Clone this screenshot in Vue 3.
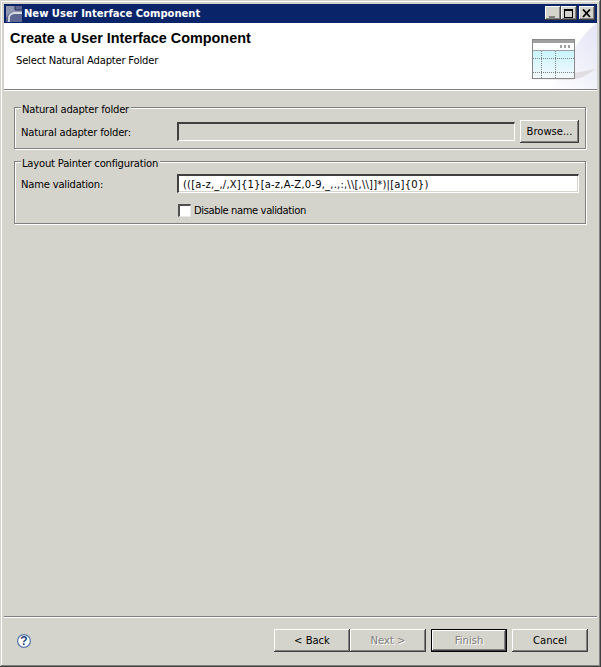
<script setup>
const buttons = [
  { label: '< Back', w: 76, mr: 0 },
  { label: 'Next >', w: 76, mr: 5, disabled: true },
  { label: 'Finish', w: 76, mr: 5, disabled: true, def: true },
  { label: 'Cancel', w: 76, mr: 0 },
]
</script>

<template>
  <div class="window">
    <div class="titlebar">
      <svg class="appicon" width="16" height="16" viewBox="0 0 16 16">
        <rect width="16" height="16" fill="#5c6690" />
        <path d="M0 0h9v4h7v2H8C4 6 2 8 1 11H0z" fill="#8f95ae" />
        <path d="M3 16v-5c1-3 3-4 6-4h7" fill="none" stroke="#d8dae2" stroke-width="1.8" />
        <path d="M9 0v4h7" fill="none" stroke="#2a3058" />
      </svg>
      <span class="title">New User Interface Component</span>
      <div class="winbtns">
        <button class="winbtn">
          <svg width="10" height="9" viewBox="0 0 10 9"><rect x="1" y="7" width="6" height="2" fill="#808080" /></svg>
        </button>
        <button class="winbtn">
          <svg width="10" height="9" viewBox="0 0 10 9"><path d="M0 0h9v9H0zM1 2v6h7V2z" fill="#000" fill-rule="evenodd" /></svg>
        </button>
        <button class="winbtn close">
          <svg width="10" height="9" viewBox="0 0 10 9"><path d="M1 0.5l7 7.5M8 0.5L1 8" stroke="#000" stroke-width="1.8" /></svg>
        </button>
      </div>
    </div>

    <header class="banner">
      <div class="bannertext">
        <h1>Create a User Interface Component</h1>
        <p>Select Natural Adapter Folder</p>
      </div>
      <svg class="wizard" width="78" height="66" viewBox="0 0 78 66">
        <defs>
          <linearGradient id="cells" x1="0" y1="0" x2="0" y2="1">
            <stop offset="0" stop-color="#c8f4fc" />
            <stop offset="1" stop-color="#f6fafe" />
          </linearGradient>
          <linearGradient id="glow" x1="0" y1="1" x2="1" y2="0">
            <stop offset="0" stop-color="#ffffff" />
            <stop offset="1" stop-color="#e4e4f6" />
          </linearGradient>
        </defs>
        <path d="M78 0v66H30C44 48 58 14 78 0z" fill="url(#glow)" />
        <path d="M8 56C30 54 58 50 76 46C70 52 60 56 50 57z" fill="#d6d0d4" opacity="0.6" />
        <rect x="13" y="16" width="43" height="40" fill="#fff" />
        <rect x="13" y="16" width="43" height="4" fill="#a0a0a0" />
        <rect x="13" y="28" width="43" height="28" fill="url(#cells)" />
        <rect x="13.5" y="16.5" width="42" height="39" fill="none" stroke="#888" />
        <path d="M14 27.5h41" stroke="#a0a0a0" />
        <path d="M41 22h2v3h-2zM45 22h2v3h-2zM49 22h2v3h-2z" fill="#a0a0a0" />
        <path d="M14 35.5h41M14 49.5h41M22.5 28v27M36.5 28v27" stroke="#808080" stroke-dasharray="1 1" />
      </svg>
    </header>
    <div class="rule"></div>

    <main class="content">
      <section class="group first">
        <span class="legend">Natural adapter folder</span>
        <div class="row">
          <label class="lbl">Natural adapter folder:</label>
          <div class="field disabled short"></div>
          <button class="btn browse">Browse...</button>
        </div>
      </section>
      <section class="group second">
        <span class="legend">Layout Painter configuration</span>
        <div class="row">
          <label class="lbl">Name validation:</label>
          <div class="field long">(([a-z,_,/,X]{1}[a-z,A-Z,0-9,_,.,:,\\[,\\]]*)|[a]{0})</div>
        </div>
        <div class="checkrow">
          <span class="check"></span>
          <span class="checktext">Disable name validation</span>
        </div>
      </section>
    </main>

    <div class="rule"></div>
    <footer class="footer">
      <svg class="help" width="16" height="16" viewBox="0 0 16 16">
        <circle cx="8" cy="8" r="6.4" fill="#fff" stroke="#5a78a8" stroke-width="1.3" />
        <text x="8" y="12.2" text-anchor="middle" class="q">?</text>
      </svg>
      <div class="actions">
        <button
          v-for="b in buttons"
          :key="b.label"
          class="btn action"
          :class="{ off: b.disabled, def: b.def }"
          :style="{ width: b.w + 'px', marginRight: b.mr + 'px' }"
        >{{ b.label }}</button>
      </div>
    </footer>
  </div>
</template>

<style>
html, body { margin: 0; background: #d5d4cc; }
</style>

<style scoped>
.window {
  box-sizing: border-box;
  width: 601px;
  height: 667px;
  padding: 4px;
  display: flex;
  flex-direction: column;
  background: #d5d4cc;
  box-shadow: inset -1px -1px 0 #404040, inset 1px 1px 0 #d5d4cc, inset -2px -2px 0 #808080, inset 2px 2px 0 #fff;
  font-family: "DejaVu Sans", sans-serif;
  font-size: 10px;
  color: #000;
}
.titlebar {
  height: 19px;
  flex: none;
  display: flex;
  align-items: center;
  background: #0a246a;
  color: #fff;
  padding-left: 2px;
}
.appicon { flex: none; }
.title {
  margin-left: 2px;
  font-weight: 700;
  font-size: 10px;
  margin-top: -1px;
}
.winbtns { margin-left: auto; display: flex; margin-right: 2px; margin-top: -1px; }
.winbtn {
  width: 16px;
  height: 14px;
  padding: 0;
  border: 0;
  background: #d5d4cc;
  box-shadow: inset -1px -1px 0 #404040, inset 1px 1px 0 #fff, inset -2px -2px 0 #808080;
  display: flex;
  align-items: center;
  justify-content: center;
}
.close { margin-left: 2px; }
.banner {
  height: 66px;
  flex: none;
  background: #fff;
  display: flex;
  justify-content: space-between;
}
.bannertext { padding: 7px 0 0 6px; }
h1 {
  margin: 0;
  font-family: "Liberation Sans", sans-serif;
  font-size: 14.4px;
  line-height: 17px;
  font-weight: 700;
}
p { margin: 7px 0 0 6px; line-height: 13px; letter-spacing: -0.2px; }
.rule {
  flex: none;
  height: 1px;
  background: #808080;
  border-bottom: 1px solid #fff;
}
.content {
  flex: 1;
  padding: 16px 11px 0 10px;
  min-height: 0;
}
.group {
  position: relative;
  box-sizing: border-box;
  border: 1px solid #808080;
  box-shadow: 1px 1px 0 #fff, inset 1px 1px 0 #fff;
  padding: 0 6px;
}
.first { height: 42px; padding-top: 12px; }
.second { height: 63px; margin-top: 12px; padding-top: 12px; }
.legend {
  position: absolute;
  left: 6px;
  top: -5px;
  line-height: 13px;
  padding: 0 2px 0 1px;
  background: #d5d4cc;
  letter-spacing: -0.2px;
}
.row { display: flex; align-items: center; }
.lbl { width: 156px; flex: none; line-height: 13px; padding-top: 2px; letter-spacing: -0.2px; }
.field {
  box-sizing: border-box;
  height: 19px;
  flex: none;
  border-top: 2px solid #404040;
  border-left: 2px solid #404040;
  border-right: 1px solid #fff;
  border-bottom: 1px solid #fff;
  box-shadow: inset -1px -1px 0 #d5d4cc;
  line-height: 18px;
  padding-left: 4px;
  white-space: nowrap;
  letter-spacing: 0.2px;
}
.short { width: 338px; background: #d5d4cc; }
.long { width: 402px; background: #fff; }
.btn {
  box-sizing: border-box;
  height: 23px;
  padding: 0;
  border: 0;
  background: #d5d4cc;
  font: inherit;
  color: #000;
  box-shadow: inset -1px -1px 0 #404040, inset 1px 1px 0 #fff, inset -2px -2px 0 #808080;
}
.browse { width: 60px; margin-left: 5px; }
.checkrow { display: flex; align-items: center; margin: 10px 0 0 156px; line-height: 13px; }
.checktext { padding-top: 1px; letter-spacing: -0.4px; }
.check {
  box-sizing: border-box;
  width: 13px;
  height: 13px;
  margin: 0 3px 0 1px;
  background: #fff;
  border-top: 2px solid #505050;
  border-left: 2px solid #505050;
  border-right: 1px solid #e8e8e8;
  border-bottom: 1px solid #e8e8e8;
}
.footer {
  flex: none;
  height: 45px;
  display: flex;
  align-items: center;
  padding: 0 9px 0 12px;
  justify-content: space-between;
}
.help { flex: none; }
.q { font: 700 12px "Liberation Sans", sans-serif; fill: #1f3f80; }
.actions { display: flex; }
.off { color: #808080; text-shadow: 1px 1px 0 #fff; }
.def {
  box-shadow: inset 0 0 0 1px #000, inset -2px -2px 0 #404040, inset 2px 2px 0 #fff, inset -3px -3px 0 #808080;
}
</style>
